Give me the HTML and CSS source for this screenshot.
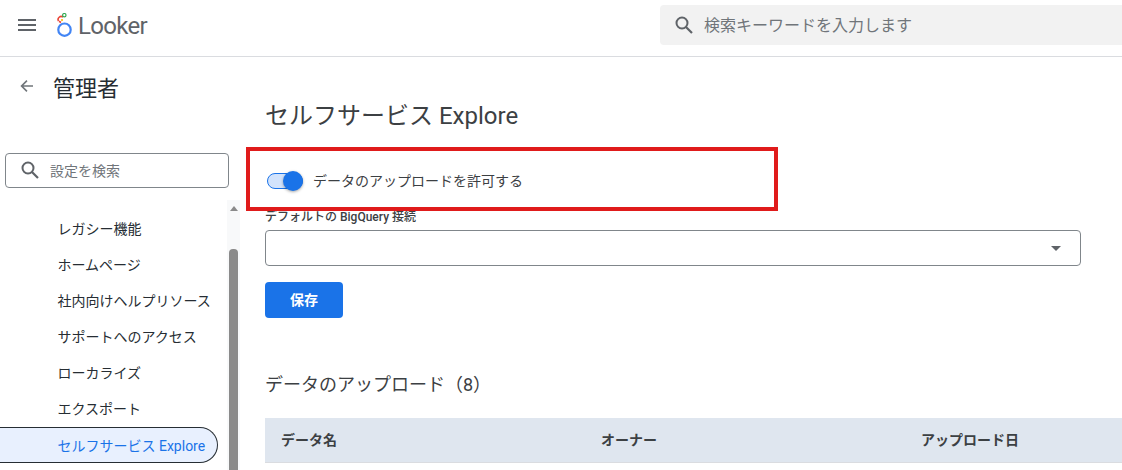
FILE: index.html
```html
<!DOCTYPE html>
<html lang="ja">
<head>
<meta charset="utf-8">
<title>セルフサービス Explore</title>
<link rel="stylesheet" href="styles.css">
</head>
<body>
<header class="topbar">
  <div class="brand">
    <svg class="menu-icon" width="18" height="12" viewBox="0 0 18 12"><path d="M0 0h18v2H0zM0 5h18v2H0zM0 10h18v2H0z" fill="#5f6368"/></svg>
    <svg class="logo-mark" width="16" height="24" viewBox="0 0 16 24">
      <circle cx="7.500" cy="16.700" r="6.200" fill="none" stroke="#4285f4" stroke-width="2.200"/>
      <path d="M6 4.200A3 3 0 0 0 1.500 8" fill="none" stroke="#ea4335" stroke-width="1.600"/>
      <path d="M2 8.300 4 9.500" fill="none" stroke="#ea4335" stroke-width="1.600"/>
      <circle cx="5" cy="7" r="1.100" fill="#fbbc04"/>
      <circle cx="7.300" cy="2.200" r="1.700" fill="none" stroke="#34a853" stroke-width="1.200"/>
    </svg>
    <span class="logo-text">Looker</span>
  </div>
  <div class="global-search">
    <svg width="24" height="24" viewBox="0 0 24 24"><circle cx="10" cy="10" r="5.500" fill="none" stroke="#5f6368" stroke-width="2"/><path d="M14 14l6 6" stroke="#5f6368" stroke-width="2.200" fill="none"/></svg>
    <span>検索キーワードを入力します</span>
  </div>
</header>
<div class="layout">
  <aside class="sidebar">
    <div class="side-head">
      <svg width="16" height="16" viewBox="0 0 16 16"><path d="M14 7.200H4.500l4-4L7.400 2 1.400 8l6 6 1.100-1.200-4-4H14z" fill="#70757a"/></svg>
      <span class="side-title">管理者</span>
    </div>
    <div class="side-search">
      <svg width="24" height="24" viewBox="0 0 24 24"><circle cx="10" cy="10" r="5.500" fill="none" stroke="#5f6368" stroke-width="2"/><path d="M14 14l6 6" stroke="#5f6368" stroke-width="2.200" fill="none"/></svg>
      <span>設定を検索</span>
    </div>
    <div class="side-body">
      <nav class="side-nav">
        <a class="nav-item">レガシー機能</a>
        <a class="nav-item">ホームページ</a>
        <a class="nav-item">社内向けヘルプリソース</a>
        <a class="nav-item">サポートへのアクセス</a>
        <a class="nav-item">ローカライズ</a>
        <a class="nav-item">エクスポート</a>
        <a class="nav-item active">セルフサービス Explore</a>
      </nav>
      <div class="scrollbar">
        <span class="scroll-up"></span>
        <span class="scroll-thumb"></span>
      </div>
    </div>
  </aside>
  <main class="content">
    <h1 class="page-title">セルフサービス Explore</h1>
    <div class="toggle-row">
      <span class="toggle"><span class="toggle-knob"></span></span>
      <span class="toggle-label">データのアップロードを許可する</span>
    </div>
    <label class="field-label">デフォルトの BigQuery 接続</label>
    <div class="select"><span class="select-caret"></span></div>
    <button class="save-btn">保存</button>
    <h2 class="section-title">データのアップロード（8）</h2>
    <div class="table-head">
      <span>データ名</span>
      <span>オーナー</span>
      <span>アップロード日</span>
    </div>
  </main>
</div>
<div class="highlight"></div>
</body>
</html>
```
FILE: styles.css
```css
* { box-sizing: border-box; }
html, body { margin: 0; height: 470px; overflow: hidden; }
body {
  background: #fff;
  color: #262d33;
  font-family: Roboto, "Noto Sans CJK JP", sans-serif;
  position: relative;
}
.topbar {
  height: 57px;
  border-bottom: 1px solid #dadce0;
  display: flex;
  align-items: flex-start;
  justify-content: space-between;
}
.brand { display: flex; align-items: center; height: 50px; padding-left: 18px; }
.logo-mark { margin-left: 21px; }
.logo-text { margin-left: 5px; margin-top: 2px; font-size: 24px; color: #5f6368; letter-spacing: -0.7px; }
.global-search {
  width: 462px;
  height: 40px;
  margin-top: 5px;
  background: #f2f2f2;
  border-radius: 4px 0 0 4px;
  display: flex;
  align-items: center;
  gap: 8px;
  padding-left: 12px;
  font-size: 16px;
  color: #70757a;
}
.global-search span { margin-top: -2px; }
.layout { display: flex; height: 413px; }
.sidebar { width: 240px; flex: none; display: flex; flex-direction: column; }
.side-head { display: flex; align-items: center; height: 58px; padding-left: 19px; gap: 18px; }
.side-title { font-size: 22px; color: #262d33; }
.side-search {
  margin: 38px 0 0 5px;
  width: 224px;
  height: 35px;
  border: 1px solid #80868b;
  border-radius: 4px;
  display: flex;
  align-items: center;
  gap: 8px;
  padding: 0 0 2px 12px;
  font-size: 14px;
  color: #70757a;
}
.side-body { display: flex; flex: 1; margin-top: 12px; min-height: 0; }
.side-nav { width: 227px; padding-top: 11px; display: flex; flex-direction: column; }
.nav-item {
  height: 36px;
  flex: none;
  display: flex;
  align-items: center;
  padding: 0 0 2px 57.500px;
  font-size: 14px;
  color: #262d33;
}
.nav-item.active {
  width: 218px;
  padding-bottom: 0;
  border: 1px solid #262d33;
  border-left: 0;
  border-radius: 0 18px 18px 0;
  background: #e8f0fe;
  color: #1a73e8;
}
.scrollbar {
  width: 13px;
  background: #f8f9fa;
  display: flex;
  flex-direction: column;
  align-items: center;
}
.scroll-up {
  margin-top: 6px;
  border-left: 4px solid transparent;
  border-right: 4px solid transparent;
  border-bottom: 5px solid #8a8a8a;
}
.scroll-thumb { width: 9px; flex: 1; margin-top: 38px; background: #8a8a8a; border-radius: 4px 4px 0 0; }
.content { flex: 1; min-width: 0; padding-left: 25px; }
.page-title { margin: 43px 0 0; font-size: 24px; line-height: 32px; font-weight: 400; color: #3c4043; }
.toggle-row { display: flex; align-items: center; margin-top: 37px; height: 24px; margin-left: 2px; }
.toggle {
  width: 36px;
  height: 16px;
  border: 1px solid #1a73e8;
  border-radius: 8px;
  background: #d2e3fc;
  position: relative;
}
.toggle-knob {
  position: absolute;
  right: -1px;
  top: -3px;
  width: 20px;
  height: 20px;
  border-radius: 50%;
  background: #1a73e8;
  box-shadow: 0 1px 3px rgba(0,0,0,.35);
}
.toggle-label { margin: -2px 0 0 10px; font-size: 14px; color: #3c4043; }
.field-label { display: block; margin-top: 16px; font-size: 12px; line-height: 16px; font-weight: 500; color: #3c4043; }
.select {
  width: 816px;
  height: 36px;
  margin-top: 5px;
  border: 1px solid #80868b;
  border-radius: 4px;
  display: flex;
  align-items: center;
  justify-content: flex-end;
  padding-right: 19px;
}
.select-caret {
  border-left: 5px solid transparent;
  border-right: 5px solid transparent;
  border-top: 5px solid #5f6368;
}
.save-btn {
  display: block;
  width: 78px;
  height: 36px;
  margin-top: 16px;
  padding: 0 0 2px;
  border: 0;
  border-radius: 4px;
  background: #1a73e8;
  color: #fff;
  font: 700 14px Roboto, "Noto Sans CJK JP", sans-serif;
}
.section-title { margin: 54px 0 0; font-size: 18px; line-height: 26px; font-weight: 400; color: #3c4043; }
.table-head {
  margin-top: 20px;
  height: 45px;
  background: #dfe6ef;
  border-bottom: 1px solid #dadce0;
  display: grid;
  grid-template-columns: 320px 320px 1fr;
  align-items: center;
  padding: 0 0 3px 16px;
  font-size: 14px;
  font-weight: 700;
  color: #3c4043;
}
.highlight {
  position: absolute;
  left: 246px;
  top: 147px;
  width: 532px;
  height: 64px;
  border: 4px solid #e01b1b;
}
```
